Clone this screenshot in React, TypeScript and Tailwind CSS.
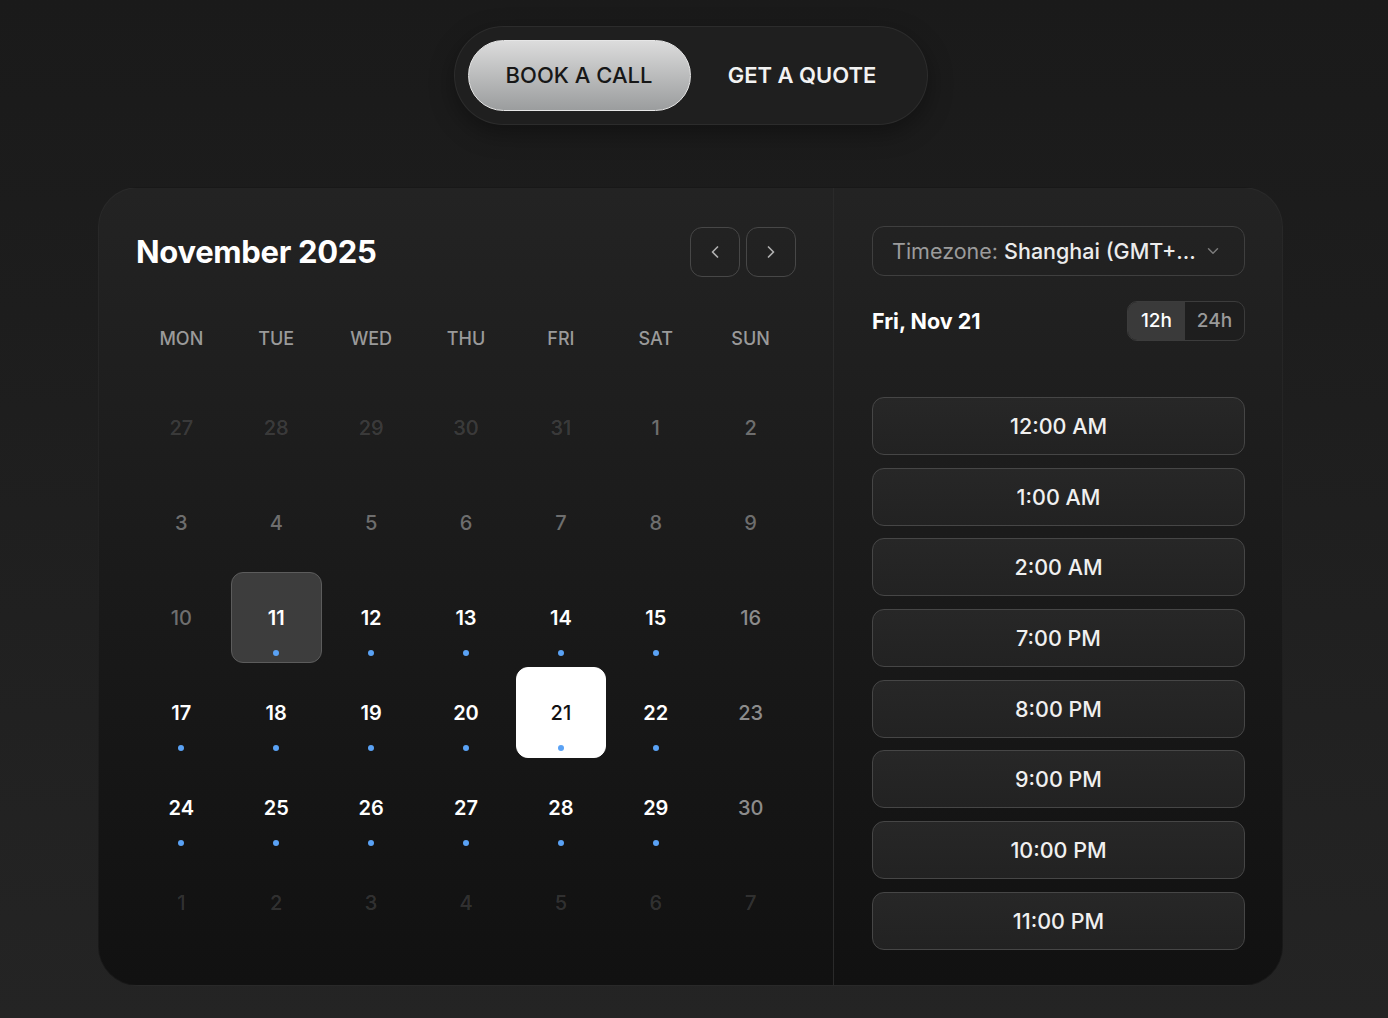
import { ChevronDown, ChevronLeft, ChevronRight } from 'lucide-react';

type Day = { n: number; kind: 'out' | 'past' | 'off' | 'open' };

const weekdays = ['MON', 'TUE', 'WED', 'THU', 'FRI', 'SAT', 'SUN'];

// November 2025 laid out Monday-first, padded with Oct / Dec days
const weeks: Day[][] = [
  [27, 28, 29, 30, 31].map((n) => ({ n, kind: 'out' as const })).concat([
    { n: 1, kind: 'past' },
    { n: 2, kind: 'past' },
  ]),
  [3, 4, 5, 6, 7, 8, 9].map((n) => ({ n, kind: 'past' as const })),
  [
    { n: 10, kind: 'past' },
    { n: 11, kind: 'open' },
    { n: 12, kind: 'open' },
    { n: 13, kind: 'open' },
    { n: 14, kind: 'open' },
    { n: 15, kind: 'open' },
    { n: 16, kind: 'off' },
  ],
  [17, 18, 19, 20, 21, 22].map((n) => ({ n, kind: 'open' as const })).concat([{ n: 23, kind: 'off' }]),
  [24, 25, 26, 27, 28, 29].map((n) => ({ n, kind: 'open' as const })).concat([{ n: 30, kind: 'off' }]),
  [1, 2, 3, 4, 5, 6, 7].map((n) => ({ n, kind: 'out' as const })),
];

const slots = ['12:00 AM', '1:00 AM', '2:00 AM', '7:00 PM', '8:00 PM', '9:00 PM', '10:00 PM', '11:00 PM'];

function DayCell({ day, today, selected }: { day: Day; today: boolean; selected: boolean }) {
  let box = 'border border-transparent';
  let text = 'text-white font-semibold';
  if (day.kind === 'out') text = 'text-white/15 font-medium';
  if (day.kind === 'past') text = 'text-[#6e6e6e] font-medium';
  if (day.kind === 'off') text = 'text-[#8c8c8c] font-medium';
  if (today) box = 'border border-[#5c5c5c] bg-[#3d3d3d]';
  if (selected) {
    box = 'border border-white bg-white';
    text = 'text-[#111] font-medium';
  }
  return (
    <div className={`relative h-[91px] rounded-[12px] flex items-center justify-center ${box}`}>
      <span className={`text-[20px] leading-none ${text}`}>{day.n}</span>
      {day.kind === 'open' && (
        <span className="absolute left-1/2 top-[77px] -translate-x-1/2 w-[6px] h-[6px] rounded-full bg-[#5aa2f5]" />
      )}
    </div>
  );
}

export default function App() {
  return (
    <div
      className="min-h-screen w-full bg-gradient-to-b from-[#1a1a1a] to-[#242424] text-white"
      style={{ fontFamily: 'Inter, "Noto Sans", sans-serif' }}
    >
      <div className="w-[1381px] flex flex-col items-center pt-[26px] pb-[33px]">
        {/* Booking mode switch */}
        <div className="flex p-[13px] rounded-full bg-[#1f1f1f] border border-white/[0.06] shadow-[0_8px_24px_rgba(0,0,0,0.35)]">
          <button className="w-[223px] h-[71px] rounded-full bg-gradient-to-b from-[#dcdcdc] to-[#9b9d9e] border border-[#e6e6e6] text-[#171717] text-[22px] font-medium">
            BOOK A CALL
          </button>
          <button className="w-[223px] h-[71px] rounded-full text-[#f2f2f2] text-[22px] font-semibold">
            GET A QUOTE
          </button>
        </div>

        {/* Scheduler card */}
        <div className="mt-[62px] w-[1185px] h-[799px] flex rounded-[40px] bg-gradient-to-b from-[#232323] to-[#111111] border border-white/[0.03] overflow-hidden">
          {/* Calendar */}
          <div className="w-[735px] shrink-0 px-[37px] pt-[39px] border-r border-[#2a2a2a]">
            <div className="flex items-center justify-between h-[50px]">
              <h1 className="text-[31px] font-bold tracking-[-0.01em] text-white">November 2025</h1>
              <div className="flex gap-[6px]">
                <button className="w-[50px] h-[50px] rounded-[12px] border border-[#474747] flex items-center justify-center text-[#b0b0b0]">
                  <ChevronLeft size={20} strokeWidth={2} />
                </button>
                <button className="w-[50px] h-[50px] rounded-[12px] border border-[#474747] flex items-center justify-center text-[#b0b0b0]">
                  <ChevronRight size={20} strokeWidth={2} />
                </button>
              </div>
            </div>

            <div className="grid grid-cols-7 gap-x-[4.2px] mt-[41px] h-[40px] items-center">
              {weekdays.map((d) => (
                <div key={d} className="text-center text-[18px] font-medium text-[#9a9a9a]">
                  {d}
                </div>
              ))}
            </div>

            <div className="mt-[24px] grid grid-cols-7 gap-x-[4.2px] gap-y-[4px]">
              {weeks.flatMap((w, wi) =>
                w.map((d, di) => (
                  <DayCell
                    key={`${wi}-${di}`}
                    day={d}
                    today={wi === 2 && d.n === 11}
                    selected={wi === 3 && d.n === 21}
                  />
                ))
              )}
            </div>
          </div>

          {/* Time slots */}
          <div className="flex-1 pl-[38px] pr-[37px] pt-[38px]">
            <button className="w-full h-[50px] rounded-[12px] border border-[#3f3f3f] flex items-center justify-between pl-[19px] pr-[22px] text-[21.5px]">
              <span className="whitespace-nowrap">
                <span className="text-[#9b9b9b]">Timezone: </span>
                <span className="text-[#ececec] font-medium">Shanghai (GMT+...</span>
              </span>
              <ChevronDown size={18} strokeWidth={2} className="text-[#7a7a7a]" />
            </button>

            <div className="mt-[25px] flex items-center justify-between">
              <div className="text-[21.5px] font-bold text-white">Fri, Nov 21</div>
              <div className="flex h-[40px] rounded-[10px] border border-[#3c3c3c] overflow-hidden bg-[#1e1e1e] text-[19px] font-medium">
                <div className="w-[57px] flex items-center justify-center bg-[#3a3a3a] text-white">12h</div>
                <div className="w-[59px] flex items-center justify-center text-[#9a9a9a]">24h</div>
              </div>
            </div>

            <div className="mt-[56px] flex flex-col gap-[12.7px]">
              {slots.map((s) => (
                <button
                  key={s}
                  className="w-full h-[58px] rounded-[12px] border border-[#464646] bg-gradient-to-b from-[#272727] to-[#222222] text-[21.5px] font-medium text-[#f0f0f0]"
                >
                  {s}
                </button>
              ))}
            </div>
          </div>
        </div>
      </div>
    </div>
  );
}
